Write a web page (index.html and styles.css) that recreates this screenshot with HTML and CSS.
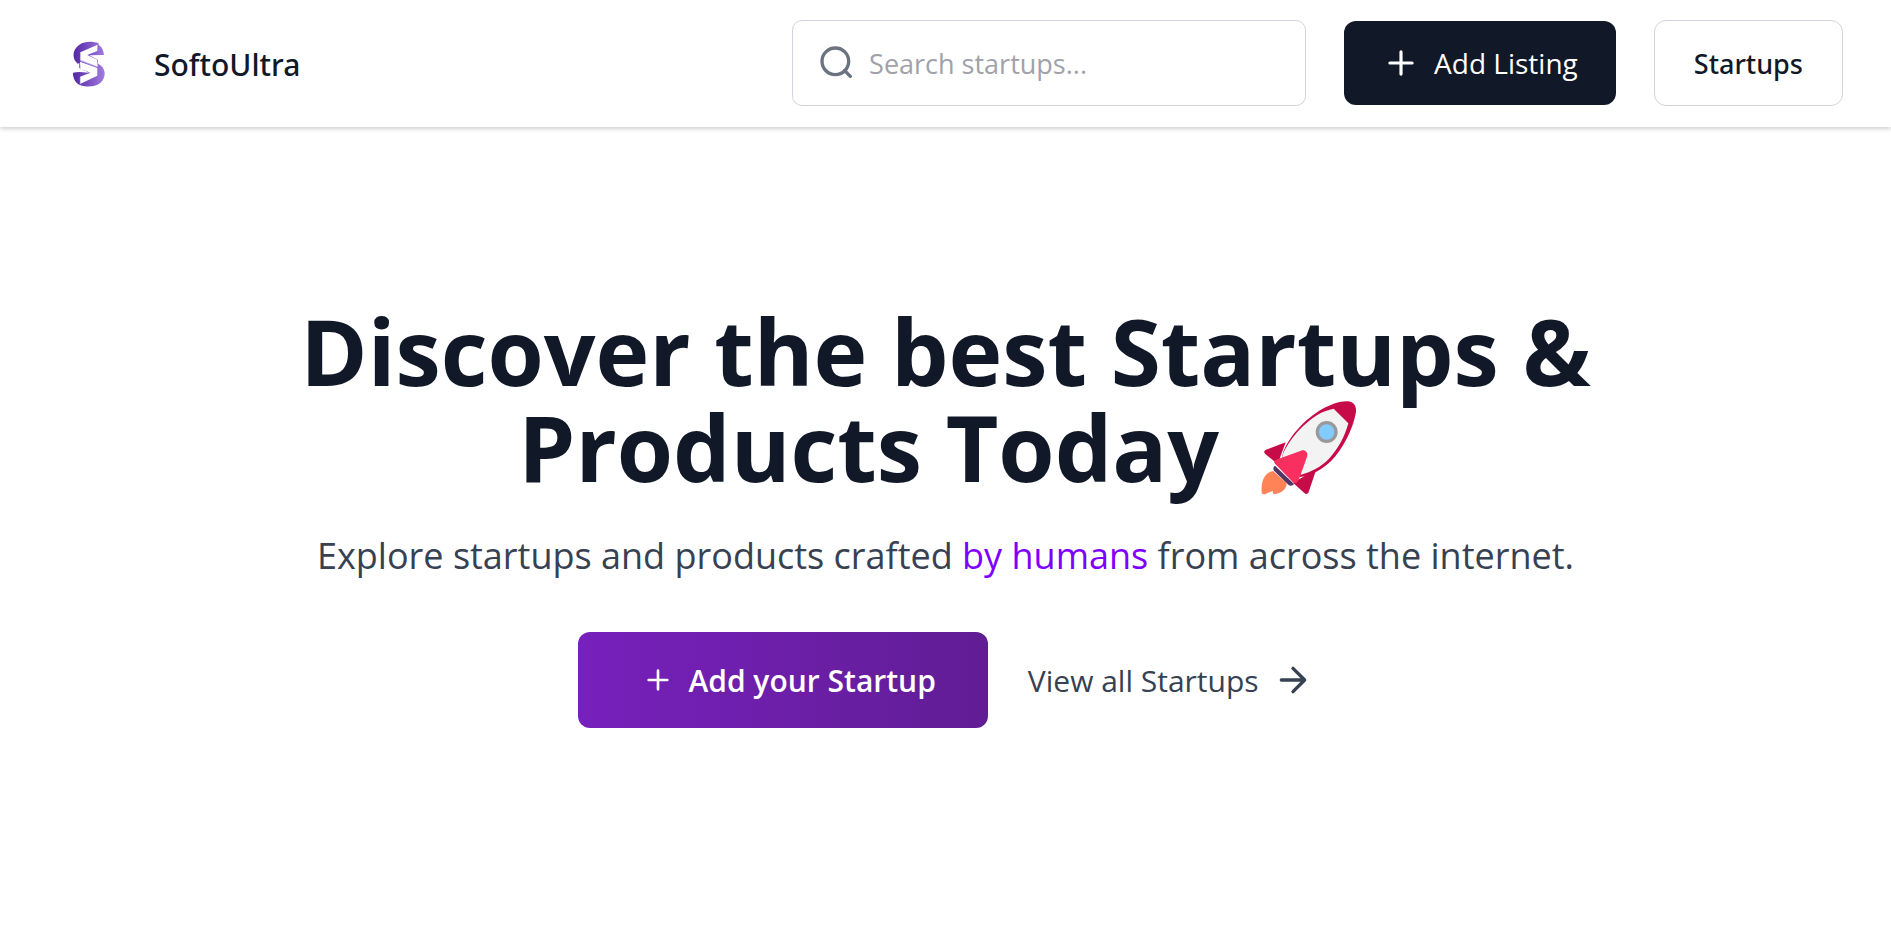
FILE: index.html
```html
<!DOCTYPE html>
<html lang="en">
<head>
    <meta charset="UTF-8">
    <meta name="viewport" content="width=device-width, initial-scale=1.0">
    <title>SoftoUltra</title>
    <link rel="stylesheet" href="styles.css">
</head>
<body>
    <header class="navbar">
        <a class="brand" href="#">
            <svg class="brand-logo" viewBox="68 62 98 138" aria-hidden="true">
                <defs>
                    <linearGradient id="logo-fill" x1="0" y1="0" x2="1" y2="0">
                        <stop offset="0" stop-color="#5325a5"/>
                        <stop offset="1" stop-color="#a27ce0"/>
                    </linearGradient>
                </defs>
                <path fill="url(#logo-fill)" d="M145 69C128 62 104 63 88 73C66 88 65 116 84 131L88 127L88 143L118 157L88 155C82 155 75 156 69 157C69 174 76 188 90 194C108 201 134 200 150 189C168 175 168 149 154 137L143 129L144 119L118 105L162 104C161 90 155 78 145 73Z"/>
                <path fill="#fff" d="M143 73L91 96L91 122L142 141L143 138L141 118L112 104L143 91Z"/>
                <path fill="#fff" d="M90 191L142 166L142 143L90 124L91 145L121 157L90 169Z"/>
                <path fill="none" stroke="#8c66d2" stroke-width="2" d="M91 120L144 141M145 69L143 91M90 194L90 169"/>
            </svg>
            <span class="brand-name">SoftoUltra</span>
        </a>
        <nav class="nav-actions">
            <label class="search">
                <svg class="search-icon" viewBox="0 0 24 24" aria-hidden="true"><circle cx="11" cy="11" r="8"/><path d="m20 20-3.5-3.5"/></svg>
                <input class="search-input" type="search" placeholder="Search startups..." aria-label="Search startups">
            </label>
            <button class="btn btn-dark" type="button">
                <svg class="plus-icon" viewBox="0 0 24 24" aria-hidden="true"><path d="M5 12h14M12 5v14"/></svg>
                Add Listing
            </button>
            <a class="btn btn-outline" href="#">Startups</a>
        </nav>
    </header>

    <main class="hero">
        <h1 class="hero-title">Discover the best Startups &amp;<br>Products Today
            <svg class="rocket" viewBox="62 60 288 288" role="img" aria-label="rocket">
                <path fill="#ff8357" d="M98 273C70 279 62 306 64 337C65 345 73 344 81 339L98 333C96 340 99 343 104 342C124 339 139 328 139 309Z"/>
                <path fill="#c70a48" d="M136 187L77 209C71 212 70 217 74 221L112 252ZM228 268L205 336C202 343 197 343 192 339L158 308Z"/>
                <path fill="#c70a48" d="M124 238C130 190 180 128 239 91C270 72 304 62 324 64C343 67 350 82 346 101C338 145 308 207 273 242C247 267 214 286 180 291Z"/>
                <path fill="#f3f3f3" d="M125 233C135 192 184 133 232 104C249 94 264 89 280 86L324 130C315 166 292 210 266 236C242 261 213 275 182 284Z"/>
                <circle cx="259" cy="156" r="33" fill="#999"/>
                <circle cx="259" cy="156" r="23" fill="#83cbff"/>
                <path fill="#533566" d="M104 257C98 260 98 267 101 272L145 315C151 319 157 317 161 312Z"/>
                <path fill="#f92f60" d="M107 239L182 212C194 208 203 217 201 228L175 300C172 308 164 312 157 306L104 251C100 246 101 241 107 239Z"/>
            </svg>
        </h1>
        <p class="hero-text">Explore startups and products crafted <span class="highlight">by humans</span> from across the internet.</p>
        <div class="hero-actions">
            <button class="btn btn-primary" type="button">
                <svg class="plus-icon plus-thin" viewBox="0 0 24 24" aria-hidden="true"><path d="M5 12h14M12 5v14"/></svg>
                Add your Startup
            </button>
            <a class="link-more" href="#">
                View all Startups
                <svg class="arrow-icon" viewBox="0 0 24 24" aria-hidden="true"><path d="M5 12h14M12 5l7 7-7 7"/></svg>
            </a>
        </div>
    </main>
</body>
</html>
```
FILE: styles.css
```css
:root {
    --ink: #111827;
    --muted: #374151;
    --border: #d1d5db;
}

* {
    box-sizing: border-box;
    margin: 0;
    padding: 0;
}

body {
    font-family: "Segoe UI", "Open Sans", "Noto Sans", sans-serif;
    background: #fff;
    color: var(--ink);
}

a {
    color: inherit;
    text-decoration: none;
}

svg {
    flex: none;
}

.navbar {
    display: flex;
    align-items: center;
    justify-content: space-between;
    padding: 20px 48px 21px 72px;
    box-shadow: 0 2px 4px rgba(0, 0, 0, 0.18);
}

.brand {
    display: flex;
    align-items: center;
    gap: 48px;
    padding-top: 2px;
    font-family: "Segoe UI", "Noto Sans", sans-serif;
    font-size: 30px;
    font-weight: 500;
}

.brand-logo {
    width: 34px;
    height: 46px;
}

.nav-actions {
    display: flex;
    align-items: center;
    gap: 38px;
}

.search {
    display: flex;
    align-items: center;
    gap: 12px;
    width: 514px;
    height: 86px;
    padding: 0 24px;
    border: 1px solid var(--border);
    border-radius: 10px;
}

.search-icon,
.plus-icon,
.arrow-icon {
    fill: none;
    stroke: currentColor;
    stroke-width: 2;
    stroke-linecap: round;
    stroke-linejoin: round;
}

.search-icon {
    width: 40px;
    height: 40px;
    color: #6b7280;
}

.search-input {
    flex: 1;
    min-width: 0;
    border: none;
    outline: none;
    background: none;
    font: inherit;
    font-size: 27px;
}

.search-input::placeholder {
    color: #a1a1aa;
}

.btn {
    display: flex;
    align-items: center;
    justify-content: center;
    border: none;
    border-radius: 12px;
    font-family: inherit;
    font-size: 28px;
    cursor: pointer;
}

.btn-dark {
    gap: 14px;
    height: 84px;
    padding: 0 38px;
    background: var(--ink);
    color: #fff;
}

.plus-icon {
    width: 38px;
    height: 38px;
}

.btn-outline {
    height: 86px;
    padding: 0 39px;
    border: 1px solid var(--border);
    font-family: "Segoe UI", "Noto Sans", sans-serif;
    font-size: 27px;
    font-weight: 500;
}

.hero {
    display: flex;
    flex-direction: column;
    align-items: center;
    padding: 176px 48px;
    text-align: center;
}

.hero-title {
    font-size: 91px;
    font-weight: 700;
    line-height: 96px;
}

.rocket {
    width: 96px;
    height: 96px;
    margin: 0 16px 0 18px;
    vertical-align: -14px;
}

.hero-text {
    margin-top: 32px;
    color: var(--muted);
    font-size: 36px;
    line-height: 56px;
}

.highlight {
    color: #7f00ff;
}

.hero-actions {
    display: flex;
    align-items: center;
    gap: 40px;
    margin-top: 48px;
}

.btn-primary {
    gap: 14px;
    height: 96px;
    padding: 0 52px 0 64px;
    background: linear-gradient(to right, #7720bd, #611d94);
    color: #fff;
    font-size: 30px;
    font-weight: 600;
}

.plus-thin {
    width: 32px;
    height: 32px;
}

.link-more {
    display: flex;
    align-items: center;
    gap: 14px;
    color: var(--muted);
    font-size: 30px;
}

.arrow-icon {
    width: 40px;
    height: 40px;
}
```
